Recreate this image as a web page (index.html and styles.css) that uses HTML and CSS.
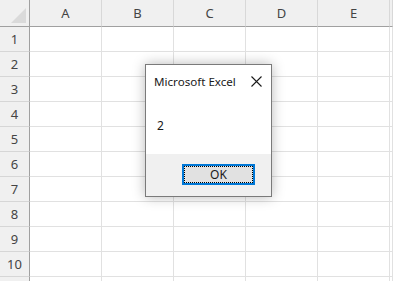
FILE: index.html
```html
<!DOCTYPE html>
<html lang="en">

    <head>
        <meta charset="UTF-8">
        <meta name="viewport" content="width=device-width, initial-scale=1.0">
        <title>Microsoft Excel</title>
        <link rel="stylesheet" href="styles.css">
    </head>

    <body>
        <div class="sheet">
            <div class="row head">
                <div class="corner"><span class="tri"></span></div>
                <div class="col">A</div>
                <div class="col">B</div>
                <div class="col">C</div>
                <div class="col">D</div>
                <div class="col">E</div>
                <div class="col rest"></div>
            </div>
            <div class="row"><div class="num">1</div><div class="cell"></div><div class="cell"></div><div class="cell"></div><div class="cell"></div><div class="cell"></div><div class="cell rest"></div></div>
            <div class="row"><div class="num">2</div><div class="cell"></div><div class="cell"></div><div class="cell"></div><div class="cell"></div><div class="cell"></div><div class="cell rest"></div></div>
            <div class="row"><div class="num">3</div><div class="cell"></div><div class="cell"></div><div class="cell"></div><div class="cell"></div><div class="cell"></div><div class="cell rest"></div></div>
            <div class="row"><div class="num">4</div><div class="cell"></div><div class="cell"></div><div class="cell"></div><div class="cell"></div><div class="cell"></div><div class="cell rest"></div></div>
            <div class="row"><div class="num">5</div><div class="cell"></div><div class="cell"></div><div class="cell"></div><div class="cell"></div><div class="cell"></div><div class="cell rest"></div></div>
            <div class="row"><div class="num">6</div><div class="cell"></div><div class="cell"></div><div class="cell"></div><div class="cell"></div><div class="cell"></div><div class="cell rest"></div></div>
            <div class="row"><div class="num">7</div><div class="cell"></div><div class="cell"></div><div class="cell"></div><div class="cell"></div><div class="cell"></div><div class="cell rest"></div></div>
            <div class="row"><div class="num">8</div><div class="cell"></div><div class="cell"></div><div class="cell"></div><div class="cell"></div><div class="cell"></div><div class="cell rest"></div></div>
            <div class="row"><div class="num">9</div><div class="cell"></div><div class="cell"></div><div class="cell"></div><div class="cell"></div><div class="cell"></div><div class="cell rest"></div></div>
            <div class="row"><div class="num">10</div><div class="cell"></div><div class="cell"></div><div class="cell"></div><div class="cell"></div><div class="cell"></div><div class="cell rest"></div></div>
            <div class="row"><div class="num"></div><div class="cell"></div><div class="cell"></div><div class="cell"></div><div class="cell"></div><div class="cell"></div><div class="cell rest"></div></div>
        </div>

        <div class="dialog">
            <div class="dialog-title">
                <span>Microsoft Excel</span>
                <svg class="close" width="11" height="11" viewBox="0 0 11 11">
                    <path d="M0.5 0.5 L10.5 10.5 M10.5 0.5 L0.5 10.5" stroke="#1a1a1a" stroke-width="1.1" fill="none"/>
                </svg>
            </div>
            <div class="dialog-msg">2</div>
            <div class="dialog-foot">
                <button class="ok-btn"><span>OK</span></button>
            </div>
        </div>
    </body>

</html>
```

FILE: styles.css
```css
* {
    margin: 0;
    padding: 0;
    box-sizing: border-box;
}

html {
    overflow: hidden;
}

body {
    font-family: 'Noto Sans', 'Liberation Sans', sans-serif;
    background-color: #fff;
    width: 393px;
    height: 281px;
    overflow: hidden;
}

.sheet {
    display: flex;
    flex-direction: column;
    height: 281px;
    overflow: hidden;
}

.row {
    display: flex;
    height: 25px;
    flex: none;
}

.row.head {
    height: 27px;
}

.corner,
.num {
    width: 30px;
    flex: none;
    background-color: #f0f0f0;
    border-right: 1px solid #a0a0a0;
    border-bottom: 1px solid #d6d6d6;
    color: #444;
    font-size: 13px;
    display: flex;
    align-items: center;
    justify-content: center;
}

.corner {
    position: relative;
    border-bottom: 1px solid #a0a0a0;
}

.tri {
    position: absolute;
    right: 3px;
    bottom: 3px;
    width: 0;
    height: 0;
    border-left: 15px solid transparent;
    border-bottom: 15px solid #dadada;
}

.col {
    width: 72px;
    flex: none;
    background-color: #f0f0f0;
    border-right: 1px solid #d8d8d8;
    border-bottom: 1px solid #a0a0a0;
    color: #444;
    font-size: 13px;
    display: flex;
    align-items: center;
    justify-content: center;
}

.cell {
    width: 72px;
    flex: none;
    border-right: 1px solid #e1e1e1;
    border-bottom: 1px solid #e1e1e1;
}

.rest {
    flex: 1;
    width: auto;
}

.dialog {
    position: absolute;
    left: 145px;
    top: 64px;
    width: 127px;
    height: 133px;
    background-color: #fff;
    border: 1px solid #7a7a7a;
    box-shadow: 0 0 12px rgba(0, 0, 0, 0.28);
    display: flex;
    flex-direction: column;
    color: #1a1a1a;
    font-size: 12px;
}

.dialog-title {
    height: 32px;
    padding-left: 8px;
    padding-right: 9px;
    display: flex;
    align-items: center;
    justify-content: space-between;
    font-size: 11.6px;
}

.dialog-msg {
    height: 57px;
    padding-left: 11px;
    display: flex;
    align-items: center;
}

.dialog-foot {
    flex: 1;
    background-color: #f0f0f0;
    padding-top: 10px;
    padding-right: 16px;
    display: flex;
    justify-content: flex-end;
    align-items: flex-start;
}

.ok-btn {
    width: 73px;
    height: 21px;
    border: 2px solid #0078d7;
    background-color: #e1e1e1;
    font-family: 'Noto Sans', 'Liberation Sans', sans-serif;
    font-size: 12px;
    color: #1a1a1a;
    padding: 0;
}

.ok-btn span {
    display: flex;
    align-items: center;
    justify-content: center;
    height: 100%;
    border: 1px dotted #000;
}
```
